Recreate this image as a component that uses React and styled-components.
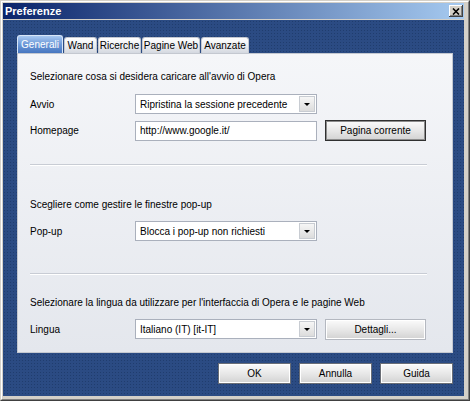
import React from "react";
import styled, { createGlobalStyle } from "styled-components";

const Global = createGlobalStyle`
  html, body {
    margin: 0;
    padding: 0;
    background: #d4d0c8;
  }
  body {
    font-family: "Liberation Sans", Arial, sans-serif;
    font-size: 10px;
    color: #000;
  }
`;

const Frame = styled.div`
  width: 470px;
  height: 401px;
  box-sizing: border-box;
  border: 1px solid;
  border-color: #d4d0c8 #404040 #404040 #d4d0c8;
`;

const FrameInner = styled.div`
  height: 100%;
  box-sizing: border-box;
  border: 1px solid;
  border-color: #fff #808080 #808080 #fff;
  background: #d4d0c8;
  padding: 1px 4px 3px 1px;
  display: flex;
  flex-direction: column;
`;

const TitleBar = styled.div`
  flex: none;
  height: 16px;
  margin-bottom: 1px;
  padding: 0 1px 0 2px;
  display: flex;
  align-items: center;
  justify-content: space-between;
  background: linear-gradient(to right, #0a246a, #a6caf0);
`;

const Title = styled.span`
  color: #fff;
  font-weight: bold;
  font-size: 11px;
`;

const CloseButton = styled.div`
  width: 14px;
  height: 12px;
  background: #d4d0c8;
  box-shadow: inset -1px -1px #404040, inset 1px 1px #fff, inset -2px -2px #808080;
  display: flex;
  align-items: center;
  justify-content: center;
`;

const Body = styled.div`
  flex: 1;
  display: flex;
  flex-direction: column;
  padding: 15px 11px 12px 14px;
  background-color: #2b4b83;
  background-image: radial-gradient(circle, #203d6e 0.7px, transparent 1px);
  background-size: 3px 3px;
`;

const Tabs = styled.div`
  display: flex;
  align-items: flex-end;
  gap: 1px;
  height: 18px;
`;

const Tab = styled.div`
  width: ${(p) => p.$w}px;
  height: ${(p) => (p.$active ? 18 : 16)}px;
  box-sizing: border-box;
  display: flex;
  align-items: center;
  justify-content: center;
  border-radius: 3px 3px 0 0;
  font-size: 10px;
  border: 1px solid ${(p) => (p.$active ? "#d8e6f8" : "#c4c8d0")};
  border-bottom: none;
  color: ${(p) => (p.$active ? "#fff" : "#000")};
  background: ${(p) =>
    p.$active
      ? "linear-gradient(#a8c8f0, #6c98d8 50%, #4676c0)"
      : "linear-gradient(#ffffff, #e8eaee 60%, #d4d8e0)"};
`;

const Panel = styled.div`
  height: 300px;
  box-sizing: border-box;
  border: 1px solid #c4c8d0;
  background: linear-gradient(#f5f6f9, #e4e7ed);
  padding: 17px 26px 0 12px;
  display: flex;
  flex-direction: column;
`;

const Heading = styled.div`
  line-height: 12px;
  height: 12px;
  margin-top: ${(p) => p.$mt || 0}px;
  white-space: nowrap;
`;

const Row = styled.div`
  display: flex;
  align-items: center;
  height: ${(p) => p.$h || 20}px;
  margin-top: ${(p) => p.$mt}px;
  gap: 8px;
`;

const Label = styled.div`
  width: 97px;
  flex: none;
`;

const Field = styled.div`
  width: 182px;
  height: 20px;
  box-sizing: border-box;
  border: 1px solid #aab0bc;
  background: #fff;
  display: flex;
  align-items: center;
  padding-left: 4px;
  flex: none;
  white-space: nowrap;
`;

const SelectText = styled.span`
  flex: 1;
`;

const Arrow = styled.div`
  width: 16px;
  height: 16px;
  margin-right: 1px;
  box-sizing: border-box;
  border: 1px solid #c8ccd2;
  background: linear-gradient(#f6f6f6, #dcdcdc);
  display: flex;
  align-items: center;
  justify-content: center;
  &::after {
    content: "";
    border-left: 3px solid transparent;
    border-right: 3px solid transparent;
    border-top: 3px solid #000;
  }
`;

const Button = styled.div`
  width: ${(p) => p.$w}px;
  height: 21px;
  box-sizing: border-box;
  display: flex;
  align-items: center;
  justify-content: center;
  font-size: 10px;
  background: linear-gradient(#fbfbfb, #e6e6e6 55%, #d2d2d2);
  border: 1px solid ${(p) => (p.$default ? "#303030" : p.$light ? "#b4b8c0" : "#6a6e76")};
  box-shadow: ${(p) => (p.$default ? "inset 0 0 0 1px #8c8c8c" : "inset 0 0 0 1px #fff")};
`;

const Divider = styled.div`
  height: 0;
  margin: ${(p) => p.$mt}px -1px 0 0;
  border-top: 1px solid #c8ccd4;
  border-bottom: 1px solid #fff;
`;

const Footer = styled.div`
  display: flex;
  justify-content: flex-end;
  gap: 8px;
  margin-top: 10px;
`;

const Select = ({ children }) => (
  <Field>
    <SelectText>{children}</SelectText>
    <Arrow />
  </Field>
);

const tabs = [
  { label: "Generali", w: 46, active: true },
  { label: "Wand", w: 33 },
  { label: "Ricerche", w: 43 },
  { label: "Pagine Web", w: 58 },
  { label: "Avanzate", w: 48 },
];

export default function App() {
  return (
    <>
      <Global />
      <Frame>
        <FrameInner>
          <TitleBar>
            <Title>Preferenze</Title>
            <CloseButton>
              <svg width="8" height="7" viewBox="0 0 8 7">
                <path d="M1 0.5 L7 6.5 M7 0.5 L1 6.5" stroke="#000" strokeWidth="1.6" />
              </svg>
            </CloseButton>
          </TitleBar>
          <Body>
            <Tabs>
              {tabs.map((t) => (
                <Tab key={t.label} $w={t.w} $active={t.active}>
                  {t.label}
                </Tab>
              ))}
            </Tabs>
            <Panel>
              <Heading>Selezionare cosa si desidera caricare all'avvio di Opera</Heading>
              <Row $mt={11}>
                <Label>Avvio</Label>
                <Select>Ripristina la sessione precedente</Select>
              </Row>
              <Row $mt={6} $h={21}>
                <Label>Homepage</Label>
                <Field>http://www.google.it/</Field>
                <Button $w={101} $default>Pagina corrente</Button>
              </Row>
              <Divider $mt={23} />
              <Heading $mt={33}>Scegliere come gestire le finestre pop-up</Heading>
              <Row $mt={10}>
                <Label>Pop-up</Label>
                <Select>Blocca i pop-up non richiesti</Select>
              </Row>
              <Divider $mt={32} />
              <Heading $mt={22}>
                Selezionare la lingua da utilizzare per l'interfaccia di Opera e le pagine Web
              </Heading>
              <Row $mt={10}>
                <Label>Lingua</Label>
                <Select>Italiano (IT) [it-IT]</Select>
                <Button $w={101} $light>Dettagli...</Button>
              </Row>
            </Panel>
            <Footer>
              <Button $w={73}>OK</Button>
              <Button $w={73}>Annulla</Button>
              <Button $w={73}>Guida</Button>
            </Footer>
          </Body>
        </FrameInner>
      </Frame>
    </>
  );
}
